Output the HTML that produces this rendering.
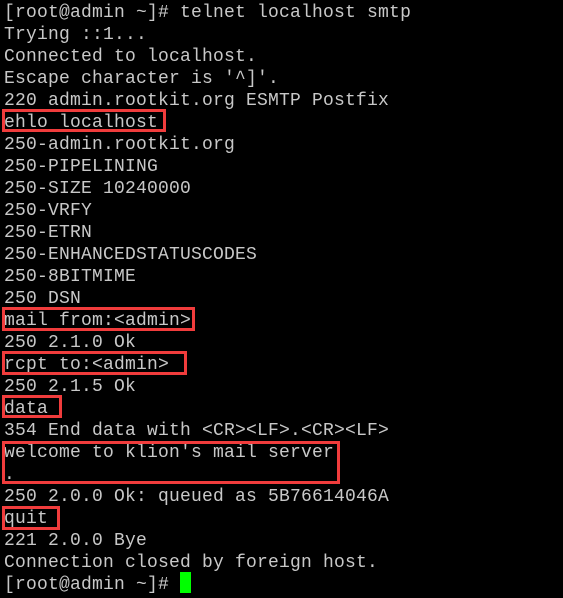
<!DOCTYPE html>
<html><head><style>
html,body{margin:0;padding:0;background:#000;width:563px;height:598px;overflow:hidden}
pre{margin:0;position:absolute;left:4px;top:2px;font-family:"Liberation Mono",monospace;font-size:18px;line-height:22px;color:#c8c8c8;letter-spacing:0.2px}
.b{position:absolute;border:3px solid #f03c3c;box-sizing:border-box}
.c{position:absolute;left:180px;top:572px;width:11px;height:21px;background:#00ff00}
</style></head><body>
<pre>[root@admin ~]# telnet localhost smtp
Trying ::1...
Connected to localhost.
Escape character is '^]'.
220 admin.rootkit.org ESMTP Postfix
ehlo localhost
250-admin.rootkit.org
250-PIPELINING
250-SIZE 10240000
250-VRFY
250-ETRN
250-ENHANCEDSTATUSCODES
250-8BITMIME
250 DSN
mail from:&lt;admin&gt;
250 2.1.0 Ok
rcpt to:&lt;admin&gt;
250 2.1.5 Ok
data
354 End data with &lt;CR&gt;&lt;LF&gt;.&lt;CR&gt;&lt;LF&gt;
welcome to klion's mail server
.
250 2.0.0 Ok: queued as 5B76614046A
quit
221 2.0.0 Bye
Connection closed by foreign host.
[root@admin ~]# </pre>
<div class="b" style="left:2px;top:109px;width:164px;height:23px"></div>
<div class="b" style="left:2px;top:307px;width:193px;height:24px"></div>
<div class="b" style="left:2px;top:351px;width:185px;height:24px"></div>
<div class="b" style="left:2px;top:395px;width:60px;height:23px"></div>
<div class="b" style="left:2px;top:441px;width:338px;height:43px"></div>
<div class="b" style="left:2px;top:506px;width:58px;height:24px"></div>
<div class="c"></div>
</body></html>
